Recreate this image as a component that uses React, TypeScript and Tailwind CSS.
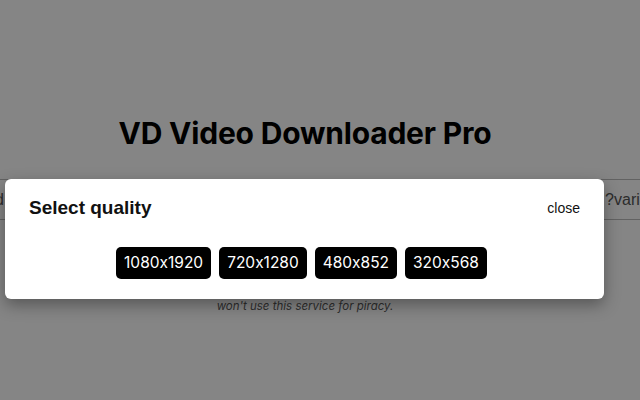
import React from 'react';

const qualities = ['1080x1920', '720x1280', '480x852', '320x568'];

const App = () => {
    return (
        <div className="relative h-[400px] w-[640px] overflow-hidden bg-white [font-feature-settings:'calt'_0]" style={{ fontFamily: 'Inter, "Liberation Sans", sans-serif' }}>
            {/* page behind the modal */}
            <div className="flex w-full flex-col items-center pt-[112px]">
                <h1 className="mr-[30px] text-[30px] font-bold leading-[42px] tracking-[-0.2px] text-black">VD Video Downloader Pro</h1>
                <div className="mt-[25px] flex h-[41px] w-full items-center justify-between overflow-hidden border-y border-[#bdbdbd] font-['Liberation_Sans',sans-serif] text-[16px] text-[#555]">
                    <span className="-ml-[5px]">d</span>
                    <span className="-mr-[22px]">?variant</span>
                </div>
                <p className="mr-[30px] mt-[78px] text-[11.5px] italic leading-[16px] text-[#5a5a5a]">
                    won't use this service for piracy.
                </p>
            </div>

            {/* overlay */}
            <div className="absolute inset-0 bg-black/[0.48]" />

            {/* modal */}
            <div className="absolute left-[5px] top-[179px] w-[599px] rounded-[6px] bg-white pb-[20px] pl-[24px] pr-[24px] pt-[15px] shadow-[0_6px_16px_rgba(0,0,0,0.35)]">
                <div className="flex items-center justify-between">
                    <h2 className="font-['Liberation_Sans',sans-serif] text-[19px] font-bold leading-[28px] text-[#111]">Select quality</h2>
                    <button className="font-['Liberation_Sans',sans-serif] text-[14px] text-[#111]">close</button>
                </div>
                <div className="mr-[6px] mt-[25px] flex justify-center gap-[8px]">
                    {qualities.map((q) => (
                        <button key={q} className="h-[32px] rounded-[5px] bg-black px-[8px] text-[15.5px] text-white">
                            {q}
                        </button>
                    ))}
                </div>
            </div>
        </div>
    );
};

export default App;
